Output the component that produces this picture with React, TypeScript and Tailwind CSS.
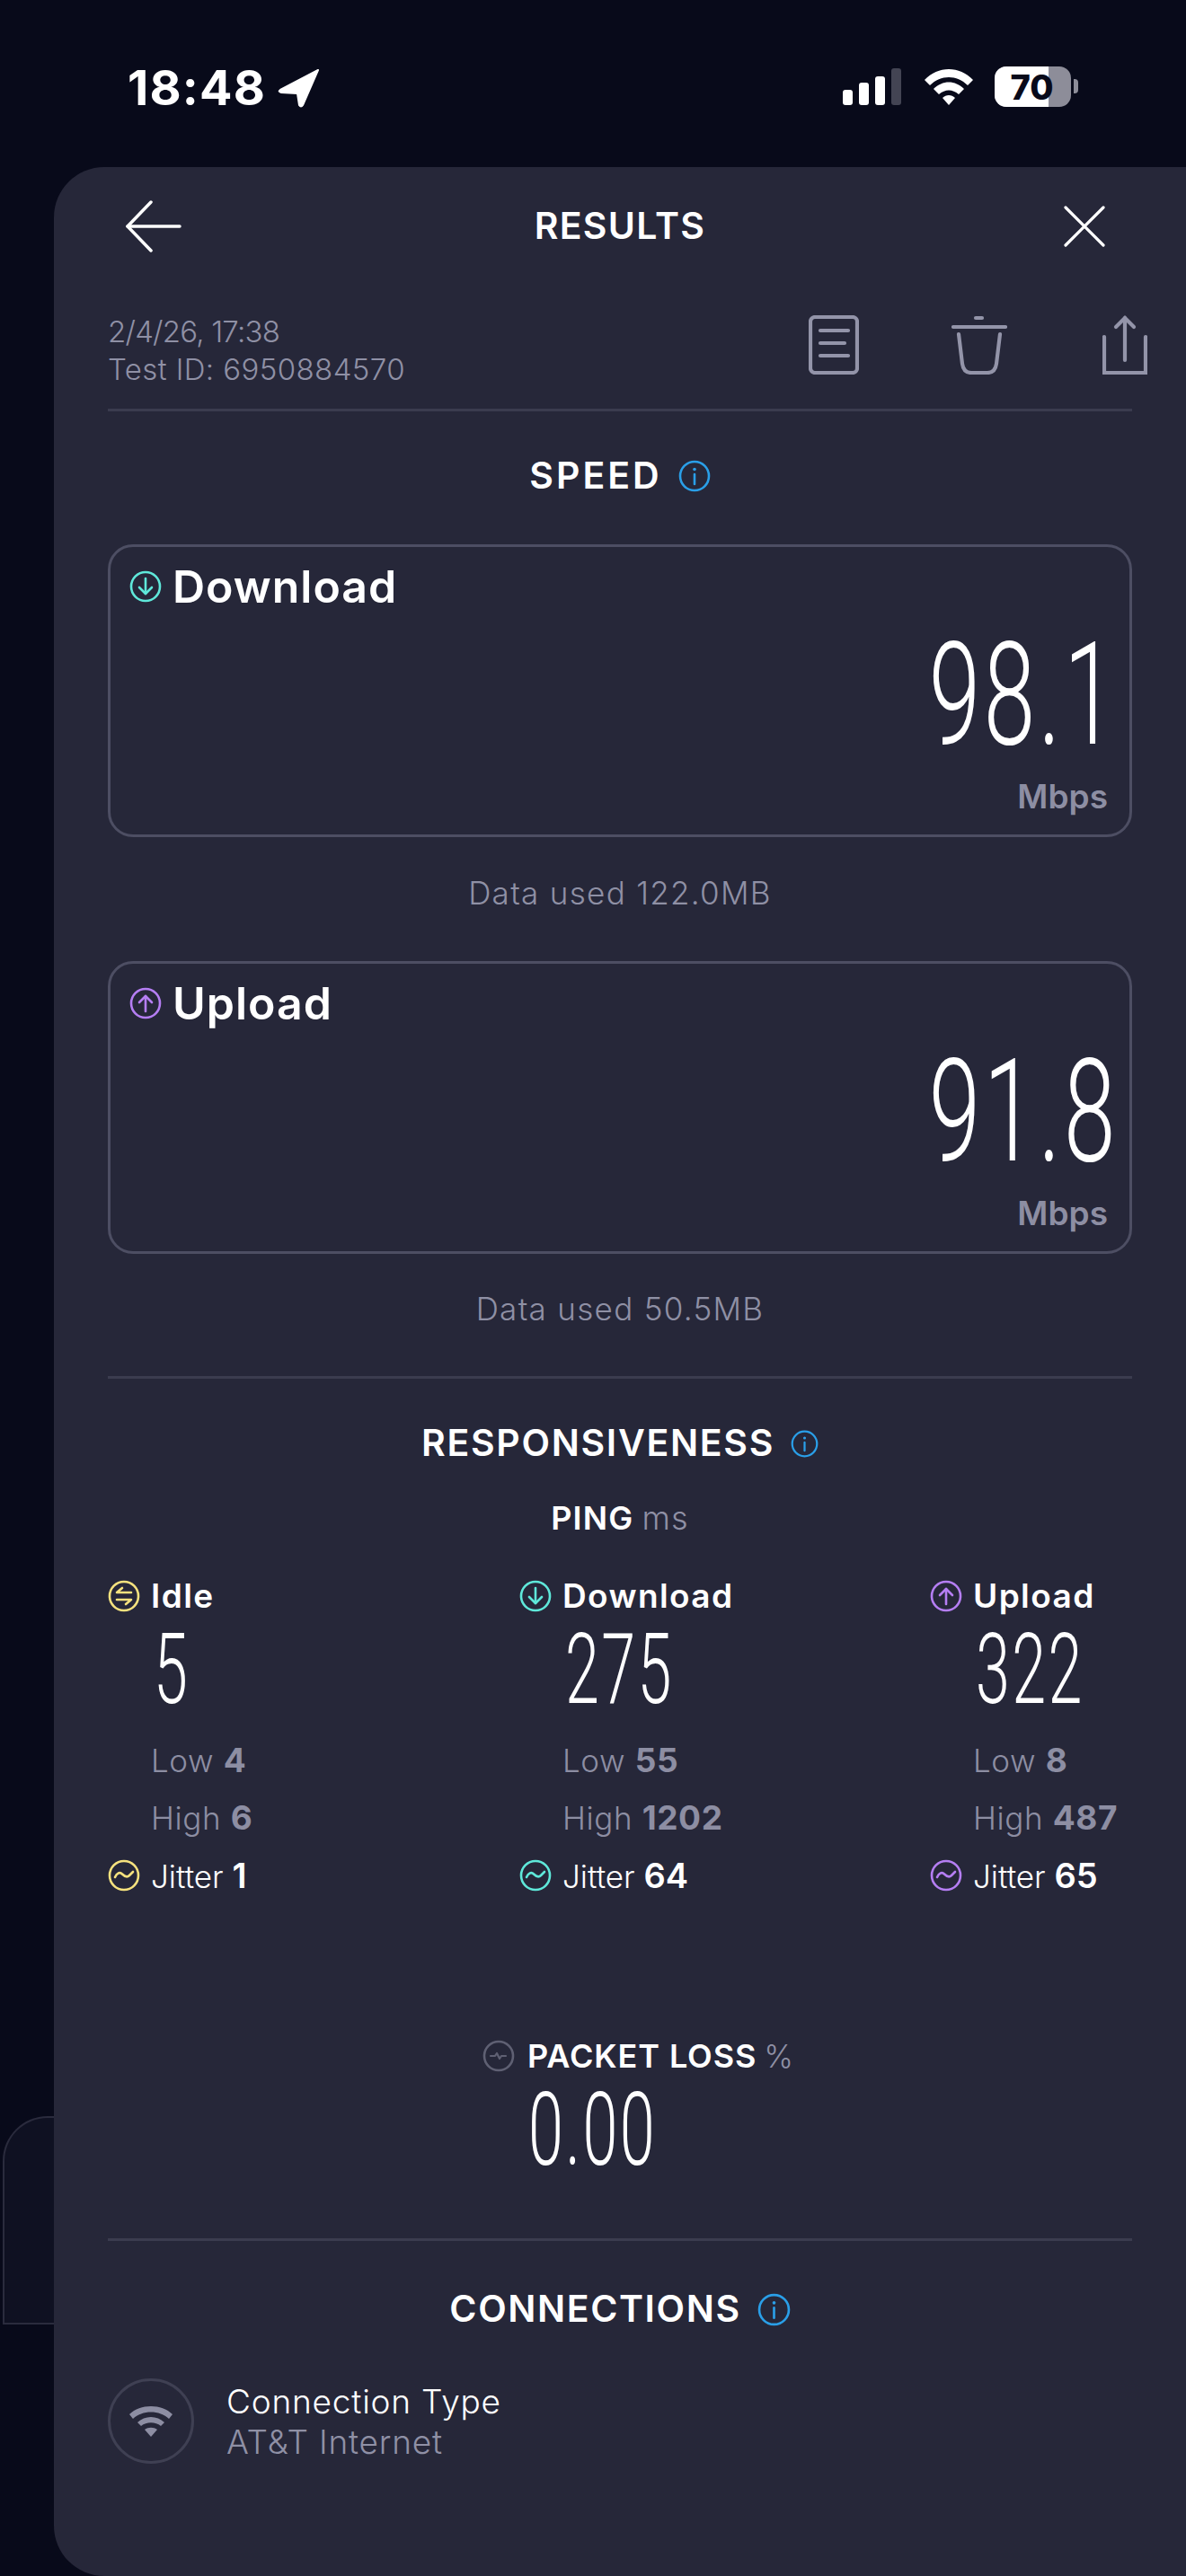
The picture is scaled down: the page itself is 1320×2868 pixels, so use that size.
import React from "react";

const CYAN = "#5fe8da";
const PURPLE = "#b57ef3";
const YELLOW = "#f6e27e";
const BLUE = "#2a9fe8";

function Ring({ color, children, size = 36 }: { color: string; children: React.ReactNode; size?: number }) {
  return (
    <svg width={size} height={size} viewBox="0 0 36 36" fill="none" className="shrink-0">
      <circle cx="18" cy="18" r="16" stroke={color} strokeWidth="2.6" />
      <g stroke={color} strokeWidth="2.6" strokeLinecap="round" strokeLinejoin="round">{children}</g>
    </svg>
  );
}
const DownGlyph = () => (<><path d="M18 9v17" /><path d="M11 19l7 7 7-7" /></>);
const UpGlyph = () => (<><path d="M18 27V10" /><path d="M11 17l7-7 7 7" /></>);
const IdleGlyph = () => (<><path d="M26 14H10l6-5" /><path d="M10 22h16l-6 5" /></>);
const WaveGlyph = () => <path d="M8 20c2-5 5.500-6 8-3.500s5.500 4 8 1.500c1.500-1.500 3-3 4-4" />;

function Info({ size }: { size: number }) {
  return (
    <svg width={size} height={size} viewBox="0 0 36 36" fill="none" className="shrink-0">
      <circle cx="18" cy="18" r="16" stroke={BLUE} strokeWidth="2.6" />
      <path d="M18 16v11" stroke={BLUE} strokeWidth="2.6" strokeLinecap="round" />
      <circle cx="18" cy="10.500" r="1.800" fill={BLUE} />
    </svg>
  );
}

function Digits({ value, h, f, right }: { value: string; h: number; f: number; right?: boolean }) {
  return (
    <div
      className={`[font-family:Roboto,sans-serif] font-light tracking-[0.035em] text-white whitespace-nowrap ${right ? "origin-right scale-x-[0.65] text-right" : "origin-left scale-x-[0.62]"}`}
      style={{ height: h, lineHeight: `${h}px`, fontSize: f }}
    >
      {value}
    </div>
  );
}

function SectionTitle({ text, info, className, tracking }: { text: string; info: number; className: string; tracking: string }) {
  return (
    <div className={`flex items-center justify-center ${className}`}>
      <span className={`text-[41px] font-semibold text-white ${tracking}`}>{text}</span>
      <span className="ml-[18px]"><Info size={info} /></span>
    </div>
  );
}

function SpeedCard({ label, value, color, up }: { label: string; value: string; color: string; up?: boolean }) {
  return (
    <div className="h-[326px] rounded-[28px] border-[3px] border-[#4d4e63] pl-[21px] pr-[24px] pt-[20px]">
      <div className="flex h-[48px] items-center gap-[12px]">
        <Ring color={color}>{up ? <UpGlyph /> : <DownGlyph />}</Ring>
        <span className="text-[50px] font-semibold leading-none tracking-[1px] text-white">{label}</span>
      </div>
      <div className="mr-[-12px] mt-[40px]"><Digits value={value} h={113} f={159} right /></div>
      <div className="mt-[32px] text-right text-[37px] font-semibold leading-[50px] text-[#8d8ea3]">Mbps</div>
    </div>
  );
}

function PingCol({ label, value, low, high, jitter, color, glyph, pad }: { label: string; value: string; low: string; high: string; jitter: string; color: string; glyph: React.ReactNode; pad: string }) {
  return (
    <div className={pad}>
      <div className="flex h-[36px] items-center gap-[12px]">
        <Ring color={color}>{glyph}</Ring>
        <span className="text-[37px] font-semibold tracking-[1.4px] text-white">{label}</span>
      </div>
      <div className="mt-[25px] pl-[51px]"><Digits value={value} h={78} f={110} /></div>
      <div className="mt-[30px] pl-[48px] text-[35px] font-light leading-[64px] tracking-[0.6px] text-[#8d8ea3]">
        <div>Low <b className="text-[37px] font-bold">{low}</b></div>
        <div>High <b className="text-[37px] font-bold">{high}</b></div>
      </div>
      <div className="flex h-[64px] items-center gap-[12px] text-[35px] text-white">
        <Ring color={color}><WaveGlyph /></Ring>
        <span className="font-light">Jitter <b className="text-[38px] font-semibold">{jitter}</b></span>
      </div>
    </div>
  );
}

export default function App() {
  return (
    <div className="relative h-[2868px] w-[1320px] overflow-hidden bg-[#080a1a] [font-family:Inter,sans-serif]">
      {/* card of the page behind the sheet */}
      <div className="absolute left-[3px] top-[2356px] h-[232px] w-[120px] rounded-tl-[50px] border-l-2 border-t-2 border-b-2 border-[#2a2b3d] bg-[#0f1122]" />

      {/* status bar */}
      <div className="relative flex h-[186px] items-start pl-[142px] pt-[71px]">
        <span className="text-[54px] font-bold leading-[54px] tracking-[1.2px] text-white">18:48</span>
        <svg width="46" height="44" viewBox="0 0 46 44" className="ml-[13px] mt-[5px]">
          <path d="M45 2 L3 24 Q0 26 4 27 L22 28 L24 41 Q26 44 28 41 Z" fill="#fff" stroke="#fff" strokeWidth="2" strokeLinejoin="round" />
        </svg>
        <div className="ml-[583px] mt-[5px] flex items-end gap-[7px]">
          {[17, 25, 32, 41].map((h, i) => (
            <div key={h} className={`w-[11px] rounded-[3px] ${i === 3 ? "bg-[#434453]" : "bg-white"}`} style={{ height: h }} />
          ))}
        </div>
        <svg width="58" height="44" viewBox="0 0 58 44" className="ml-[24px] mt-[4px]">
          <path d="M2 14 C17 -2 41 -2 56 14 L50 20 C38 8 20 8 8 20 Z" fill="#fff" />
          <path d="M12 24 C22 14 36 14 46 24 L40 30 C33 24 25 24 18 30 Z" fill="#fff" />
          <path d="M22 34 C26 30 32 30 36 34 L29 42 Z" fill="#fff" />
        </svg>
        <div className="relative ml-[22px] mt-[3px] h-[45px] w-[85px] overflow-hidden rounded-[13px] bg-[#8d8d99]">
          <div className="h-full w-[60px] bg-white" />
          <span className="absolute inset-0 flex items-center justify-center pr-[2px] text-[38px] font-extrabold leading-none text-[#080a1a]">70</span>
        </div>
        <div className="ml-[3px] mt-[17px] h-[16px] w-[5px] rounded-r-[4px] bg-[#8d8d99]" />
      </div>

      {/* sheet */}
      <div className="relative h-[2682px] w-[1300px] ml-[60px] rounded-l-[56px] bg-[#262739] pl-[60px] pr-[100px]">
        {/* header */}
        <div className="flex h-[132px] items-center justify-between pl-[20px] pr-[30px]">
          <svg width="62" height="58" viewBox="0 0 62 58" fill="none" stroke="#fff" strokeWidth="3.500" strokeLinecap="round">
            <path d="M2 29H60" />
            <path d="M28 2L2 29L28 56" strokeLinejoin="round" />
          </svg>
          <span className="mr-[6px] text-[41px] font-semibold tracking-[1.3px] text-white">RESULTS</span>
          <svg width="46" height="46" viewBox="0 0 46 46" fill="none" stroke="#fff" strokeWidth="3.200" strokeLinecap="round">
            <path d="M2 2L44 44M44 2L2 44" />
          </svg>
        </div>

        {/* meta row */}
        <div className="flex h-[140px] justify-between border-b-[3px] border-[#3b3c4f] pt-[30px]">
          <div className="text-[33px] font-light leading-[42px] text-[#8f90a5]">
            <div className="tracking-[-0.8px]">2/4/26, 17:38</div>
            <div className="tracking-[0.4px]">Test ID: 6950884570</div>
          </div>
          <div className="mr-[-17px] flex items-start pt-[3px]">
            <svg width="56" height="66" viewBox="0 0 56 66" fill="none" stroke="#9394a9" strokeWidth="4.200" strokeLinecap="round">
              <rect x="2" y="2" width="52" height="62" rx="5" />
              <path d="M13 17H44M13 31H40M13 45H44" />
            </svg>
            <svg width="62" height="66" viewBox="0 0 62 66" fill="none" stroke="#9394a9" strokeWidth="4.200" strokeLinecap="round" className="ml-[103px]">
              <path d="M2 13H60" />
              <path d="M27 3H34" />
              <path d="M8 21L12 54C13 61 17 64 22 64H40C45 64 49 61 50 54L54 21" />
            </svg>
            <svg width="50" height="66" viewBox="0 0 50 66" fill="none" stroke="#9394a9" strokeWidth="4.200" strokeLinecap="round" className="ml-[106px]">
              <path d="M25 50V3" />
              <path d="M15 13L25 3L35 13" />
              <path d="M2 24V64H48V24" />
            </svg>
          </div>
        </div>

        {/* speed */}
        <SectionTitle text="SPEED" info={36} tracking="tracking-[3px]" className="h-[142px] mb-[6px] pt-[2px]" />
        <SpeedCard label="Download" value="98.1" color={CYAN} />
        <div className="flex h-[138px] items-center justify-center pb-[14px] text-[35px] font-light tracking-[1.3px] text-[#8f90a5]">Data used 122.0MB</div>
        <SpeedCard label="Upload" value="91.8" color={PURPLE} up />
        <div className="flex h-[139px] items-center justify-center border-b-[3px] border-[#3b3c4f] pb-[14px] text-[35px] font-light tracking-[1.3px] text-[#8f90a5]">Data used 50.5MB</div>

        {/* responsiveness */}
        <SectionTitle text="RESPONSIVENESS" info={31} tracking="tracking-[1.7px]" className="h-[138px] pt-[6px]" />
        <div className="flex h-[34px] items-center justify-center text-[36px] leading-none tracking-[1.2px] text-white">
          <span className="font-semibold">PING</span>
          <span className="ml-[9px] font-light text-[#8f90a5]">ms</span>
        </div>
        <div className="mt-[52px] flex">
          <PingCol pad="w-[458px]" label="Idle" value="5" low="4" high="6" jitter="1" color={YELLOW} glyph={<IdleGlyph />} />
          <PingCol pad="w-[457px]" label="Download" value="275" low="55" high="1202" jitter="64" color={CYAN} glyph={<DownGlyph />} />
          <PingCol pad="w-[225px]" label="Upload" value="322" low="8" high="487" jitter="65" color={PURPLE} glyph={<UpGlyph />} />
        </div>

        {/* packet loss */}
        <div className="mt-[151px] flex h-[36px] items-center pl-[417px]">
          <svg width="36" height="36" viewBox="0 0 36 36" fill="none" stroke="#5f6073" strokeLinecap="round" strokeLinejoin="round">
            <circle cx="18" cy="18" r="16" strokeWidth="2.600" />
            <path d="M9 18h5l2-3 3 6 2-3h5" strokeWidth="2.200" />
          </svg>
          <span className="ml-[14px] text-[36px] font-semibold tracking-[0.9px] text-white">PACKET LOSS</span>
          <span className="ml-[8px] text-[35px] font-light text-[#8f90a5]">%</span>
        </div>
        <div className="mt-[25px] pl-[468px]"><Digits value="0.00" h={80} f={113} /></div>

        <div className="mt-[80px] border-b-[3px] border-[#3b3c4f]" />

        {/* connections */}
        <SectionTitle text="CONNECTIONS" info={37} tracking="tracking-[1.6px]" className="h-[150px] pt-[2px]" />
        <div className="mt-[3px] flex h-[95px] items-center gap-[36px]">
          <div className="flex h-[95px] w-[96px] items-center justify-center rounded-full border-[3px] border-[#3f4053]">
            <svg width="50" height="36" viewBox="0 0 50 36" fill="#8d8ea3">
              <path d="M1 10C13 -2 37 -2 49 10L45 15C35 5 15 5 5 15Z" />
              <path d="M10 19C18 11 32 11 40 19L36 23C30 18 20 18 14 23Z" />
              <path d="M18 27C22 24 28 24 32 27L25 35Z" />
            </svg>
          </div>
          <div className="text-[37px] font-light leading-[45px] tracking-[0.8px]">
            <div className="text-white">Connection Type</div>
            <div className="text-[#8f90a5]">AT&amp;T Internet</div>
          </div>
        </div>
      </div>
    </div>
  );
}
